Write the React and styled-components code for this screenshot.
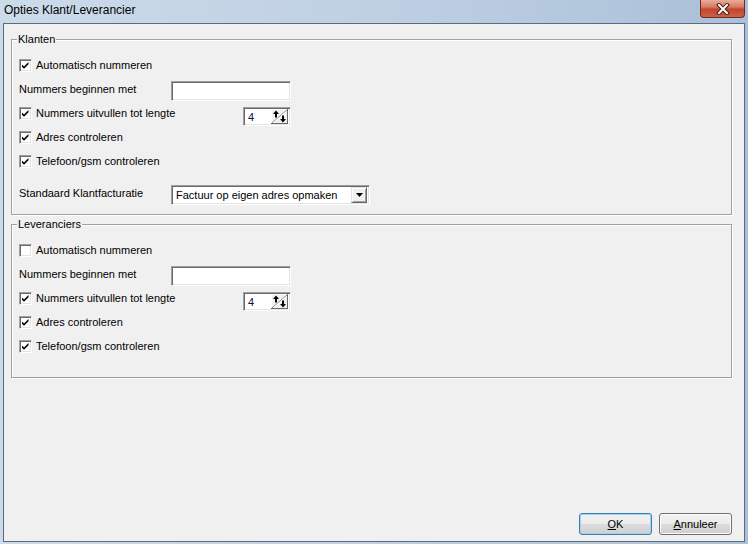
import styled, { createGlobalStyle } from "styled-components";

const GlobalStyle = createGlobalStyle`
  html, body {
    margin: 0;
    padding: 0;
    background: #fff;
  }
  body {
    font-family: "Liberation Sans", Arial, sans-serif;
    font-size: 11px;
    color: #000;
  }
`;

const Window = styled.div`
  width: 748px;
  height: 544px;
  box-sizing: border-box;
  display: flex;
  flex-direction: column;
  padding: 0 3px 2px 3px;
  background: linear-gradient(to right, #ccdbea 0%, #bfd0e3 50%, #aac0d8 100%);
`;

const TitleBar = styled.div`
  height: 23px;
  display: flex;
  align-items: flex-start;
  justify-content: space-between;
  padding-left: 1px;
`;

const Title = styled.div`
  font-size: 12px;
  line-height: 20px;
  color: #000;
`;

const CloseBtn = styled.div`
  width: 45px;
  height: 18px;
  box-sizing: border-box;
  border: 1px solid #6c2b20;
  border-top: none;
  border-radius: 0 0 4px 4px;
  background: linear-gradient(#e6ad9c 0%, #d77c63 40%, #c2452c 55%, #cc6346 100%);
  display: flex;
  align-items: center;
  justify-content: center;
`;

const Client = styled.div`
  flex: 1;
  display: flex;
  flex-direction: column;
  background: #f0f0f0;
  border: 1px solid #5c6b7d;
  padding: 9px 12px 6px 7px;
`;

const Group = styled.fieldset`
  margin: ${(p) => p.$top || 0}px 0 0 0;
  padding: 8px 0 ${(p) => p.$bottom}px 7px;
  border: 1px solid #a0a0a0;
  box-shadow: inset 1px 1px 0 #fff, 1px 1px 0 #fff;
  min-width: 0;
`;

const Legend = styled.legend`
  padding: 0 1px;
  margin-left: -2px;
  line-height: 12px;
  font-size: 11px;
  background: #f0f0f0;
`;

const Row = styled.div`
  display: flex;
  align-items: center;
  height: ${(p) => p.$h || 24}px;
  margin-top: ${(p) => p.$mt || 0}px;
`;

const Label = styled.span`
  display: inline-block;
  width: ${(p) => (p.$w ? `${p.$w}px` : "auto")};
  white-space: nowrap;
`;

const Check = styled.span`
  width: 13px;
  height: 13px;
  box-sizing: border-box;
  border: 1px solid;
  border-color: #a0a0a0 #fff #fff #a0a0a0;
  box-shadow: inset 1px 1px 0 #696969, inset -1px -1px 0 #e3e3e3;
  background: #fff;
  margin-right: 4px;
  display: flex;
  align-items: center;
  justify-content: center;
  flex-shrink: 0;
`;

const sunken = `
  box-sizing: border-box;
  border: 1px solid;
  border-color: #a0a0a0 #fff #fff #a0a0a0;
  box-shadow: inset 1px 1px 0 #696969, inset -1px -1px 0 #e3e3e3;
  background: #fff;
`;

const TextBox = styled.div`
  ${sunken}
  width: 120px;
  height: 20px;
  margin-top: 3px;
`;

const Spinner = styled.div`
  ${sunken}
  width: 48px;
  height: 19px;
  margin-top: 6px;
  display: flex;
  align-items: center;
  justify-content: space-between;
  padding: 2px 2px 1px 4px;
`;

const SpinValue = styled.span`
  color: #10103a;
`;

const Combo = styled.div`
  ${sunken}
  width: 199px;
  height: 20px;
  margin-top: 3px;
  display: flex;
  align-items: center;
  justify-content: space-between;
  padding: 2px 2px 2px 4px;
`;

const DropBtn = styled.div`
  width: 16px;
  height: 16px;
  box-sizing: border-box;
  background: #f0f0f0;
  border: 1px solid;
  border-color: #e3e3e3 #696969 #696969 #e3e3e3;
  box-shadow: inset 1px 1px 0 #fff, inset -1px -1px 0 #a0a0a0;
  display: flex;
  align-items: center;
  justify-content: center;
`;

const ButtonRow = styled.div`
  margin-top: auto;
  display: flex;
  justify-content: flex-end;
  gap: 7px;
`;

const Button = styled.div`
  width: 73px;
  height: 22px;
  box-sizing: border-box;
  border: 1px solid ${(p) => (p.$default ? "#3c7fb1" : "#707070")};
  border-radius: 3px;
  background: linear-gradient(#f2f2f2 0%, #ebebeb 50%, #dddddd 51%, #cfcfcf 100%);
  box-shadow: ${(p) =>
    p.$default ? "inset 0 0 0 1px #9fd3f6" : "inset 0 0 0 1px #fcfcfc"};
  display: flex;
  align-items: center;
  justify-content: center;
  u {
    text-decoration: underline;
  }
`;

const CheckMark = () => (
  <svg width="9" height="9" viewBox="0 0 9 9">
    <path d="M1 3.5 L3 5.5 L7.5 1 V3.2 L3 7.7 L1 5.7 Z" fill="#000" />
  </svg>
);

const CheckBox = ({ checked }) => <Check>{checked && <CheckMark />}</Check>;

const SpinIcon = () => (
  <svg width="17" height="15" viewBox="0 0 17 15">
    <rect x="0" y="0" width="17" height="15" fill="#f0f0f0" />
    <path d="M0 14.5 H17 M16.5 0 V15" stroke="#696969" />
    <path d="M0 0.5 H16 M0.5 0 V14" stroke="#fff" />
    <path d="M1 14 L16 1" stroke="#808080" />
    <path d="M2 14 L16 2" stroke="#fff" />
    <path d="M5 1.5 L2 5 H4 V8.5 H6 V5 H8 Z" fill="#000" />
    <path d="M12 13.5 L9 10 H11 V6.5 H13 V10 H15 Z" fill="#000" />
  </svg>
);

const CloseIcon = () => (
  <svg width="14" height="12" viewBox="0 0 14 12">
    <path d="M3 2 L11 10 M11 2 L3 10" stroke="#4a1a12" strokeWidth="4" strokeLinecap="square" />
    <path d="M3 2 L11 10 M11 2 L3 10" stroke="#fff" strokeWidth="2" strokeLinecap="square" />
  </svg>
);

const Numbering = ({ legend, top, bottom, auto, children }) => (
  <Group $top={top} $bottom={bottom}>
    <Legend>{legend}</Legend>
    <Row>
      <CheckBox checked={auto} />
      <Label>Automatisch nummeren</Label>
    </Row>
    <Row>
      <Label $w={152}>Nummers beginnen met</Label>
      <TextBox />
    </Row>
    <Row>
      <CheckBox checked />
      <Label $w={207}>Nummers uitvullen tot lengte</Label>
      <Spinner>
        <SpinValue>4</SpinValue>
        <SpinIcon />
      </Spinner>
    </Row>
    <Row>
      <CheckBox checked />
      <Label>Adres controleren</Label>
    </Row>
    <Row>
      <CheckBox checked />
      <Label>Telefoon/gsm controleren</Label>
    </Row>
    {children}
  </Group>
);

export default function App() {
  return (
    <>
      <GlobalStyle />
      <Window>
        <TitleBar>
          <Title>Opties Klant/Leverancier</Title>
          <CloseBtn>
            <CloseIcon />
          </CloseBtn>
        </TitleBar>
        <Client>
          <Numbering legend="Klanten" bottom={10} auto>
            <Row $h={22} $mt={9}>
              <Label $w={152}>Standaard Klantfacturatie</Label>
              <Combo>
                <span>Factuur op eigen adres opmaken</span>
                <DropBtn>
                  <svg width="7" height="4" viewBox="0 0 7 4">
                    <path d="M0 0 H7 L3.5 4 Z" fill="#000" />
                  </svg>
                </DropBtn>
              </Combo>
            </Row>
          </Numbering>
          <Numbering legend="Leveranciers" top={3} bottom={19} />
          <ButtonRow>
            <Button $default>
              <span>
                <u>O</u>K
              </span>
            </Button>
            <Button>
              <span>
                <u>A</u>nnuleer
              </span>
            </Button>
          </ButtonRow>
        </Client>
      </Window>
    </>
  );
}
